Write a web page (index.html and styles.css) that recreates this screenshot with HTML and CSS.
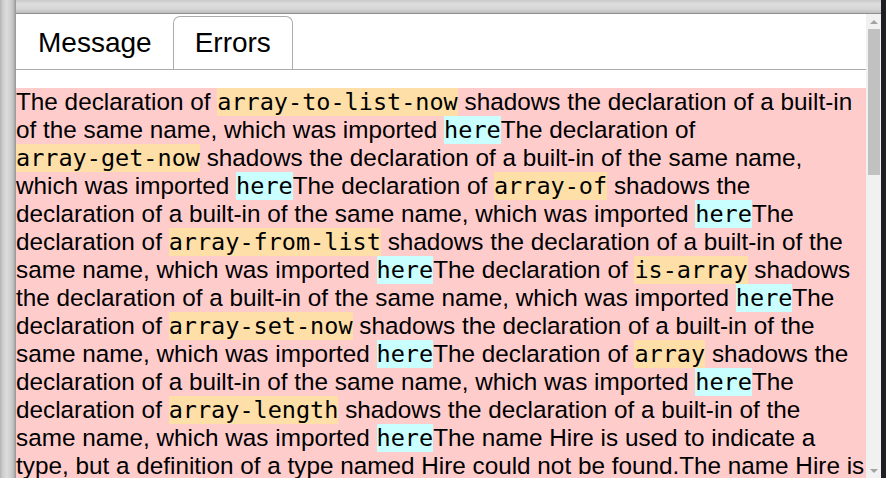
FILE: index.html
```html
<!DOCTYPE html>
<html>
<head>
<meta charset="utf-8">
<link rel="stylesheet" href="styles.css">
</head>
<body>
<div class="frame-left"></div>
<div class="center">
  <div class="topbar"></div>
  <div class="body-row">
    <div class="panel">
      <div class="tabs">
        <div class="tab">Message</div>
        <div class="tab active">Errors</div>
      </div>
      <div class="errors">The declaration of <code class="id">array-to-list-now</code> shadows the declaration of a built-in of the same name, which was imported <code class="loc">here</code>The declaration of <code class="id">array-get-now</code> shadows the declaration of a built-in of the same name, which was imported <code class="loc">here</code>The declaration of <code class="id">array-of</code> shadows the declaration of a built-in of the same name, which was imported <code class="loc">here</code>The declaration of <code class="id">array-from-list</code> shadows the declaration of a built-in of the same name, which was imported <code class="loc">here</code>The declaration of <code class="id">is-array</code> shadows the declaration of a built-in of the same name, which was imported <code class="loc">here</code>The declaration of <code class="id">array-set-now</code> shadows the declaration of a built-in of the same name, which was imported <code class="loc">here</code>The declaration of <code class="id">array</code> shadows the declaration of a built-in of the same name, which was imported <code class="loc">here</code>The declaration of <code class="id">array-length</code> shadows the declaration of a built-in of the same name, which was imported <code class="loc">here</code>The name Hire is used to indicate a type, but a definition of a type named Hire could not be found.The name Hire is used to indicate a type, but a definition of a type named Hire could not be found.The name Hire is used to indicate a type, but a definition of a type named Hire could not be found.</div>
    </div>
    <div class="scrollbar">
      <div class="arrow up"></div>
      <div class="track"><div class="thumb"></div></div>
      <div class="arrow down"></div>
    </div>
  </div>
</div>
<div class="frame-right"></div>
</body>
</html>
```
FILE: styles.css
```css
html, body {
  margin: 0;
  padding: 0;
  width: 886px;
  height: 478px;
  overflow: hidden;
}
body {
  display: flex;
  font-family: "Liberation Sans", Arial, sans-serif;
  background: #ffffff;
}
.frame-left {
  width: 16px;
  flex: none;
  background: linear-gradient(to right, #b4b4b4 0px, #d0d0d0 3px, #dcdcdc 7px, #cdcdcd 11px, #b9b9b9 14px, #9c9c9c 15px, #9c9c9c 16px);
}
.center {
  width: 865px;
  flex: none;
  display: flex;
  flex-direction: column;
}
.topbar {
  height: 13px;
  flex: none;
  background: linear-gradient(to bottom, #c9c9c9 0px, #dedede 4px, #d6d6d6 9px, #bdbdbd 13px);
  border-bottom: 1px solid #8f8f8f;
}
.body-row {
  flex: 1;
  display: flex;
  min-height: 0;
}
.panel {
  width: 850px;
  flex: none;
  overflow: hidden;
  background: #fff;
}
.tabs {
  display: flex;
  padding-top: 2px;
  border-bottom: 1px solid #ababab;
  height: 53px;
}
.tab {
  font-size: 28px;
  color: #000;
  padding: 10px 21px 11px;
  border: 1px solid transparent;
  border-bottom: none;
  border-radius: 7px 7px 0 0;
  line-height: 31px;
}
.tab:first-child {
  padding-left: 21px;
  padding-right: 20px;
}
.tab.active {
  border-color: #ababab;
  background: #fff;
  margin-bottom: -1px;
  height: 53px;
  box-sizing: border-box;
}
.errors {
  margin-top: 18px;
  background: #ffcccc;
  font-size: 24.3px;
  color: #000;
  line-height: 28px;
}
code {
  font-family: "DejaVu Sans Mono", monospace;
  font-size: 23.5px;
  white-space: nowrap;
}
.id {
  background: #ffdfa8;
}
.loc {
  background: #c9ffff;
}
.scrollbar {
  width: 15px;
  flex: none;
  background: #f1f1f1;
  display: flex;
  flex-direction: column;
}
.arrow {
  height: 15px;
  flex: none;
  display: flex;
  align-items: center;
  justify-content: center;
}
.arrow::before {
  content: "";
  width: 0;
  height: 0;
  border-left: 4px solid transparent;
  border-right: 4px solid transparent;
}
.arrow.up::before {
  border-bottom: 4px solid #a3a3a3;
}
.arrow.down::before {
  border-top: 4px solid #a3a3a3;
}
.track {
  flex: 1;
  padding: 0 1px 0 2px;
}
.thumb {
  height: 146px;
  background: #c1c1c1;
}
.frame-right {
  width: 5px;
  flex: none;
  background: #1f1f23;
}
```
